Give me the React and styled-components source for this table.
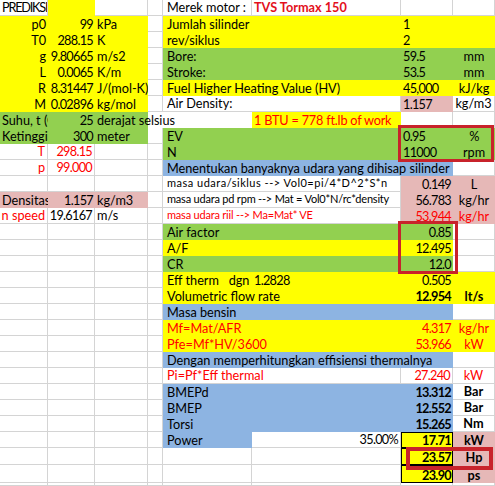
import React from 'react'
import styled, { createGlobalStyle } from 'styled-components'

const GlobalStyle = createGlobalStyle`
  html, body {
    margin: 0;
    padding: 0;
    background: #ffffff;
  }
`

const colors = {
  y: '#ffff00',
  g: '#92d050',
  b: '#8db4e2',
  p: '#e6b8b7',
}

const Sheet = styled.div`
  position: relative;
  display: grid;
  grid-template-columns: 48px 47px 53px 15px 89px 149px 52px 42px;
  grid-template-rows: repeat(28, 16px) 17px 18px 3px;
  width: 495px;
  height: 486px;
  overflow: hidden;
  background: #ffffff;
  font-family: Lato, 'Liberation Sans', sans-serif;
  font-size: 12.7px;
  color: #000;
`

const Cell = styled.div`
  grid-column: span ${p => p.$span || 1};
  box-sizing: border-box;
  display: flex;
  align-items: flex-end;
  justify-content: ${p => (p.$a === 'r' ? 'flex-end' : p.$a === 'c' ? 'center' : 'flex-start')};
  padding: 0 2px 1px ${p => (p.$wide ? 4 : 2)}px;
  white-space: pre;
  overflow: ${p => (p.$spill ? 'visible' : 'hidden')};
  background: ${p => (p.$bg ? colors[p.$bg] : 'transparent')};
  color: ${p => (p.$red ? '#ff0000' : '#000')};
  font-weight: ${p => (p.$b ? 700 : 400)};
  font-size: ${p => (p.$sm ? '11px' : 'inherit')};
  letter-spacing: ${p => (p.$ls !== undefined ? `${p.$ls}px` : 'normal')};
  line-height: 14px;
  border-right: ${p => (p.$bg || p.$nb ? 'none' : '1px solid #d4d4d4')};
  border-bottom: ${p => (p.$bg || p.$nb ? 'none' : '1px solid #d4d4d4')};
  ${p => p.$box && 'outline: 1px solid #000; outline-offset: -1px;'}
`

const Brand = styled.span`
  color: #e3101c;
  font-weight: 700;
`

const Mark = styled.div`
  position: absolute;
  box-sizing: border-box;
  border: ${p => p.$w}px solid #c8232b;
  pointer-events: none;
`

const E = {}
const rows = [
  [
    { t: 'PREDIKSI', ls: -1.2 }, { bg: 'y' }, {}, {},
    { t: 'Merek motor :', w: true }, { node: <Brand>TVS Tormax 150</Brand> }, {}, {},
  ],
  [
    { t: 'p0', a: 'r', bg: 'y' }, { t: '99', a: 'r', bg: 'y' }, { t: 'kPa', bg: 'y' }, {},
    { t: 'Jumlah silinder', s: 2, bg: 'y', w: true }, { t: '1', bg: 'y' }, { bg: 'y' },
  ],
  [
    { t: 'T0', a: 'r', bg: 'y' }, { t: '288.15', a: 'r', bg: 'y' }, { t: 'K', bg: 'y' }, {},
    { t: 'rev/siklus', s: 2, bg: 'y', w: true }, { t: '2', bg: 'y' }, { bg: 'y' },
  ],
  [
    { t: 'g', a: 'r', bg: 'y' }, { t: '9.80665', a: 'r', bg: 'y' }, { t: 'm/s2', bg: 'y' }, {},
    { t: 'Bore:', s: 2, bg: 'g', w: true }, { t: '59.5', bg: 'g' }, { t: 'mm', a: 'c', bg: 'g' },
  ],
  [
    { t: 'L', a: 'r', bg: 'y' }, { t: '0.0065', a: 'r', bg: 'y' }, { t: 'K/m', bg: 'y' }, {},
    { t: 'Stroke:', s: 2, bg: 'g', w: true }, { t: '53.5', bg: 'g' }, { t: 'mm', a: 'c', bg: 'g' },
  ],
  [
    { t: 'R', a: 'r', bg: 'y' }, { t: '8.31447', a: 'r', bg: 'y' }, { t: 'J/(mol-K)', bg: 'y' }, {},
    { t: 'Fuel Higher Heating Value (HV)', s: 2, bg: 'y', w: true }, { t: '45,000', bg: 'y' }, { t: 'kJ/kg', a: 'c', bg: 'y' },
  ],
  [
    { t: 'M', a: 'r', bg: 'y' }, { t: '0.02896', a: 'r', bg: 'y' }, { t: 'kg/mol', bg: 'y' }, {},
    { t: 'Air Density:', s: 2, w: true }, { t: '1.157', bg: 'p' }, { t: 'kg/m3', a: 'c' },
  ],
  [
    { t: 'Suhu, t (C)', bg: 'g' }, { t: '25', a: 'r', bg: 'g' }, { t: 'derajat selsius', bg: 'g', spill: true }, { nb: true },
    { nb: true }, { t: '1 BTU = 778 ft.lb of work', bg: 'y', red: true, ls: -0.2 }, {}, {},
  ],
  [
    { t: 'Ketinggian', bg: 'g' }, { t: '300', a: 'r', bg: 'g' }, { t: 'meter', bg: 'g' }, {},
    { t: 'EV', s: 2, bg: 'g', w: true }, { t: '0.95', bg: 'g' }, { t: '%', a: 'c', bg: 'g' },
  ],
  [
    { t: 'T', a: 'r', red: true }, { t: '298.15', a: 'r', red: true }, {}, {},
    { t: 'N', s: 2, bg: 'g', w: true }, { t: '11000', bg: 'g' }, { t: 'rpm', a: 'c', bg: 'g' },
  ],
  [
    { t: 'p', a: 'r', red: true }, { t: '99.000', a: 'r', red: true }, {}, {},
    { t: 'Menentukan banyaknya udara yang dihisap silinder', s: 3, bg: 'b', w: true }, {},
  ],
  [
    {}, {}, {}, {},
    { t: 'masa udara/siklus --> Vol0=pi/4*D^2*S*n', s: 2, sm: true, w: true, ls: 0.5 }, { t: '0.149', a: 'r', bg: 'p' }, { t: 'L', a: 'c', bg: 'p' },
  ],
  [
    { t: 'Densitas', bg: 'p' }, { t: '1.157', a: 'r', bg: 'p' }, { t: 'kg/m3', bg: 'p' }, {},
    { t: 'masa udara pd rpm --> Mat = Vol0*N/rc*density', s: 2, sm: true, w: true, ls: -0.2 }, { t: '56.783', a: 'r', bg: 'p' }, { t: 'kg/hr', a: 'c', bg: 'p' },
  ],
  [
    { t: 'n speed', a: 'r', red: true }, { t: '19.6167', a: 'r' }, { t: 'm/s' }, {},
    { t: 'masa udara riil --> Ma=Mat* VE', s: 2, sm: true, red: true, w: true, ls: -0.2 }, { t: '53.944', a: 'r', bg: 'p', red: true }, { t: 'kg/hr', a: 'c', bg: 'p', red: true },
  ],
  [
    {}, {}, {}, {},
    { t: 'Air factor', s: 2, bg: 'g', w: true }, { t: '0.85', a: 'r', bg: 'g' }, {},
  ],
  [
    {}, {}, {}, {},
    { t: 'A/F', s: 2, bg: 'y', w: true }, { t: '12.495', a: 'r', bg: 'y' }, {},
  ],
  [
    {}, {}, {}, {},
    { t: 'CR', s: 2, bg: 'g', w: true }, { t: '12.0', a: 'r', bg: 'g' }, {},
  ],
  [
    {}, {}, {}, {},
    { t: 'Eff therm   dgn k', bg: 'y', w: true }, { t: '1.2828', bg: 'y' }, { t: '0.505', a: 'r', bg: 'y' }, { bg: 'y' },
  ],
  [
    {}, {}, {}, {},
    { t: 'Volumetric flow rate', s: 2, bg: 'y', w: true }, { t: '12.954', a: 'r', b: true, bg: 'y' }, { t: 'lt/s', a: 'c', b: true, bg: 'y' },
  ],
  [
    {}, {}, {}, {},
    { t: 'Masa bensin', s: 3, bg: 'b', w: true }, {},
  ],
  [
    {}, {}, {}, {},
    { t: 'Mf=Mat/AFR', s: 2, bg: 'y', red: true, w: true }, { t: '4.317', a: 'r', bg: 'y', red: true }, { t: 'kg/hr', a: 'c', bg: 'y', red: true },
  ],
  [
    {}, {}, {}, {},
    { t: 'Pfe=Mf*HV/3600', s: 2, bg: 'y', red: true, w: true }, { t: '53.966', a: 'r', bg: 'y', red: true }, { t: 'kW', a: 'c', bg: 'y', red: true },
  ],
  [
    {}, {}, {}, {},
    { t: 'Dengan memperhitungkan effisiensi thermalnya', s: 3, bg: 'b', w: true }, {},
  ],
  [
    {}, {}, {}, {},
    { t: 'Pi=Pf*Eff thermal', s: 2, red: true, w: true }, { t: '27.240', a: 'r', red: true }, { t: 'kW', a: 'c', red: true },
  ],
  [
    {}, {}, {}, {},
    { t: 'BMEPd', s: 2, bg: 'b', w: true }, { t: '13.312', a: 'r', b: true, bg: 'b' }, { t: 'Bar', a: 'c', b: true },
  ],
  [
    {}, {}, {}, {},
    { t: 'BMEP', s: 2, bg: 'b', w: true }, { t: '12.552', a: 'r', b: true, bg: 'b' }, { t: 'Bar', a: 'c', b: true },
  ],
  [
    {}, {}, {}, {},
    { t: 'Torsi', s: 2, bg: 'b', w: true }, { t: '15.265', a: 'r', b: true, bg: 'b' }, { t: 'Nm', a: 'c', b: true },
  ],
  [
    {}, {}, {}, {},
    { t: 'Power', bg: 'b', w: true }, { t: '35.00%', a: 'r' }, { t: '17.71', a: 'r', b: true, bg: 'y', box: true }, { t: 'kW', a: 'c', b: true, bg: 'p' },
  ],
  [
    {}, {}, {}, {},
    {}, {}, { t: '23.57', a: 'r', b: true, bg: 'y', box: true }, { t: 'Hp', a: 'c', b: true, bg: 'p' },
  ],
  [
    {}, {}, {}, {},
    {}, {}, { t: '23.90', a: 'r', b: true, bg: 'y', box: true }, { t: 'ps', a: 'c', b: true, bg: 'p' },
  ],
  [{}, {}, {}, {}, {}, {}, {}, {}],
]

// numbers are set a little tighter, as the sheet's own font has narrow figures
const spacing = c => {
  if (c.ls !== undefined) return c.ls
  if (typeof c.t === 'string' && /^[\d.,%]+$/.test(c.t)) return -0.7
  return undefined
}

const App = () => {
  return (
    <>
      <GlobalStyle />
      <Sheet>
        {rows.map((row, ri) =>
          row.map((c = E, ci) => (
            <Cell
              key={`${ri}-${ci}`}
              $span={c.s}
              $a={c.a}
              $bg={c.bg}
              $red={c.red}
              $b={c.b}
              $sm={c.sm}
              $nb={c.nb}
              $box={c.box}
              $spill={c.spill}
              $wide={c.w}
              $ls={spacing(c)}
            >
              {c.node || c.t}
            </Cell>
          ))
        )}
        <Mark $w={3} style={{ left: 398, top: 125, width: 96, height: 37 }} />
        <Mark $w={3} style={{ left: 398, top: 221, width: 60, height: 53 }} />
        <Mark $w={4} style={{ left: 406, top: 447, width: 87, height: 23 }} />
      </Sheet>
    </>
  )
}

export default App
